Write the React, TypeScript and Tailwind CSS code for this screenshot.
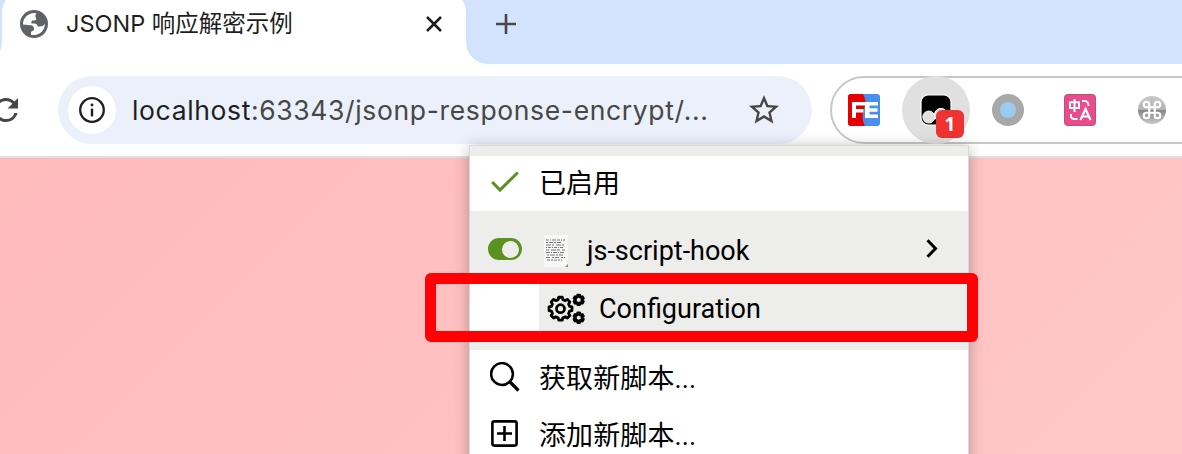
import type { ReactNode } from "react";
import { MdStarBorder, MdRefresh } from "react-icons/md";

function gearPath(cx: number, cy: number, outer: number, inner: number, teeth: number): string {
  const step = (Math.PI * 2) / teeth;
  const points: string[] = [];
  for (let i = 0; i < teeth; i++) {
    const a = i * step - Math.PI / 2;
    const ring: [number, number][] = [
      [-0.32, inner],
      [-0.2, outer],
      [0.2, outer],
      [0.32, inner],
    ];
    for (const [offset, radius] of ring) {
      const angle = a + offset * step;
      points.push(`${(cx + Math.cos(angle) * radius).toFixed(2)} ${(cy + Math.sin(angle) * radius).toFixed(2)}`);
    }
  }
  return `M${points.join("L")}Z`;
}

function GlobeIcon() {
  return (
    <svg className="size-7" viewBox="0 0 28 28">
      <circle cx="14" cy="14" r="14" fill="#5f6368" />
      <path
        d="M3 14C3 8 8 3.2 14.2 3L16.8 3.4C15.6 4.2 15.2 5.2 15.4 6.4C15.6 7.6 16.6 8 16.2 9.4C15.8 10.6 14 10.4 12.4 10.4C11.4 10.4 11.4 12 11.4 13.4H14.5C16.8 13.4 17.3 15 17.6 16.5H19.6C22 16.5 24 15.5 24.9 13.8C25 20 20 24.9 14.5 25H11V21.8C12.8 21.6 14 20.4 14 18.6C14 16.6 12.6 15.4 10.8 15.2L3 14.6Z"
        fill="#fff"
      />
    </svg>
  );
}

function InfoIcon() {
  return (
    <svg className="size-[26px]" viewBox="0 0 26 26" fill="none" stroke="#1f1f1f">
      <circle cx="13" cy="13" r="11.8" strokeWidth="2.3" />
      <path d="M13 11.6V19.4" strokeWidth="2.4" />
      <circle cx="13" cy="8" r="1.4" fill="#1f1f1f" stroke="none" />
    </svg>
  );
}

function FeIcon() {
  return (
    <svg className="size-8" viewBox="0 0 32 32">
      <rect width="32" height="32" rx="3" fill="#4a8ff0" />
      <path d="M3 0H15C17 4 18 7 17 11L15 19C14 24 15 28 17 32H3Q0 32 0 29V3Q0 0 3 0Z" fill="#e60000" />
      <path
        d="M4 8H17V11.5H8V15H15.5V18.5H8V24H4ZM17 8H30V11.5H21.5V14.3H29.5V17.7H21.5V20.5H30V24H17Z"
        fill="#fff"
      />
    </svg>
  );
}

function MonkeyIcon() {
  return (
    <svg className="size-8" viewBox="0 0 32 32">
      <rect x="1" y="1" width="30" height="30" rx="7" fill="#000" stroke="#fff" strokeWidth="1.2" />
      <circle cx="8.8" cy="23" r="6" fill="#e0e0e0" stroke="#fff" strokeWidth="1" />
      <circle cx="21" cy="21" r="6.6" fill="#e0e0e0" stroke="#fff" strokeWidth="1" />
    </svg>
  );
}

function TranslateIcon() {
  return (
    <svg className="size-8" viewBox="0 0 32 32" fill="none" stroke="#fff" strokeWidth="2">
      <rect x="0.5" y="0.5" width="31" height="31" rx="3" fill="#ec4b8b" stroke="#b5537b" strokeWidth="1" />
      <path d="M6 8.3H15V14H6ZM10.5 5V18" />
      <path d="M18 7H20.5C23.5 7 24.5 9 24.5 12M7 20V22C7 24.5 8.5 25 11 25H13.5" />
      <path d="M16.5 26L21.5 15L26.5 26M18 22.5H25" strokeWidth="2.2" />
    </svg>
  );
}

function CommandIcon() {
  return (
    <svg className="size-7" viewBox="0 0 28 28">
      <defs>
        <linearGradient id="shade" x1="0" y1="0" x2="0" y2="1">
          <stop offset="0" stopColor="#c9c9c9" />
          <stop offset="0.5" stopColor="#b2b2b2" />
          <stop offset="0.51" stopColor="#858585" />
          <stop offset="1" stopColor="#c8c8c8" />
        </linearGradient>
      </defs>
      <circle cx="14" cy="14" r="14" fill="url(#shade)" />
      <path
        d="M11.5 9V19A2.5 2.5 0 1 1 9 16.5H19A2.5 2.5 0 1 1 16.5 19V9A2.5 2.5 0 1 1 19 11.5H9A2.5 2.5 0 1 1 11.5 9Z"
        fill="none"
        stroke="#fff"
        strokeWidth="2"
        transform="translate(-1.4 -1.4) scale(1.1)"
      />
    </svg>
  );
}

function ScriptIcon() {
  return (
    <svg className="h-8 w-6" viewBox="0 0 24 32">
      <path d="M0 0H24V32H0Z" fill="#f8f8f8" />
      <g stroke="#777" strokeWidth="1.1">
        <path d="M2 5H21" strokeDasharray="3 1 1 1 4 1" />
        <path d="M2 7.5H18" strokeDasharray="2 1 4 1" />
        <path d="M2 10H21" strokeDasharray="5 1 2 2" />
        <path d="M2 12.5H20" strokeDasharray="1 1 3 1" />
        <path d="M2 15H21" strokeDasharray="3 2 5 1" />
        <path d="M2 17.5H21" strokeDasharray="4 1 1 1" />
        <path d="M3 20H19" strokeDasharray="2 1 5 1" />
        <path d="M2 22.5H21" strokeDasharray="4 2 2 1" />
        <path d="M3 25H18" strokeDasharray="3 1 2 1" />
      </g>
      <path d="M24 29V32H21Z" fill="#888" />
    </svg>
  );
}

function GearsIcon() {
  return (
    <svg className="h-8 w-10" viewBox="0 0 40 32" fill="none" stroke="#000" strokeLinejoin="round">
      <path d={gearPath(14.5, 15.7, 11.6, 9.4, 8)} strokeWidth="2.8" />
      <circle cx="14.5" cy="15.7" r="4" strokeWidth="2.8" />
      <path d={gearPath(32.7, 6.9, 4.9, 3.3, 6)} strokeWidth="2.8" />
      <path d={gearPath(32.7, 24.7, 4.9, 3.3, 6)} strokeWidth="2.8" />
    </svg>
  );
}

function MenuRow({ icon, children }: { icon: ReactNode; children: ReactNode }) {
  return (
    <div className="flex h-[57px] items-center">
      <span className="flex w-[69px] justify-center pb-1">{icon}</span>
      <span className="pt-px tracking-[0.1px]">{children}</span>
    </div>
  );
}

function TabStrip() {
  return (
    <header className="flex h-16 shrink-0 overflow-hidden bg-[#d3e3fd]">
      <div className="relative -mt-2 ml-0.5 flex h-[72px] w-[464px] items-start rounded-t-[20px] bg-white pt-[18px]">
        <svg className="absolute bottom-0 -left-[22px] size-[22px]" viewBox="0 0 22 22">
          <path d="M22 0V22H0A22 22 0 0 0 22 0Z" fill="#fff" />
        </svg>
        <svg className="absolute -right-[22px] bottom-0 size-[22px]" viewBox="0 0 22 22">
          <path d="M0 0V22H22A22 22 0 0 1 0 0Z" fill="#fff" />
        </svg>
        <div className="flex h-7 w-full items-center pl-[18px]">
          <GlobeIcon />
          <span className="ml-[18px] grow text-[23.5px] whitespace-nowrap text-[#1f1f1f]">JSONP 响应解密示例</span>
          <svg className="mr-6 size-4" viewBox="0 0 16 16" stroke="#1f1f1f" strokeWidth="2.6">
            <path d="M1 1L15 15M15 1L1 15" />
          </svg>
        </div>
      </div>
      <svg className="mt-3.5 ml-[30px] size-5" viewBox="0 0 20 20" stroke="#474747" strokeWidth="2.6">
        <path d="M10 0V20M0 10H20" />
      </svg>
    </header>
  );
}

function Toolbar() {
  return (
    <div className="flex h-[94px] shrink-0 border-b-2 border-[#dfe1e0] bg-white pt-3">
      <MdRefresh className="mt-[16px] -ml-3 size-9 shrink-0 text-[#474747]" />
      <div className="ml-[34px] flex h-[68px] w-[754px] shrink-0 items-center rounded-full bg-[#ebf0fa] pl-2.5">
        <span className="flex size-12 items-center justify-center rounded-full bg-white">
          <InfoIcon />
        </span>
        <span className="ml-4 grow pt-0.5 text-[26.5px] tracking-[0.64px] whitespace-nowrap text-[#474747]">
          <span className="text-[#1f1f1f]">localhost</span>:63343/jsonp-response-encrypt/...
        </span>
        <MdStarBorder className="mr-[30px] size-9 shrink-0 text-[#474747]" />
      </div>
      <div className="ml-[18px] flex h-[68px] w-[400px] shrink-0 items-center rounded-l-full border-2 border-[#c7c7c7] pl-4">
        <FeIcon />
        <span className="relative ml-[22px] flex size-[68px] shrink-0 items-center justify-center rounded-full bg-[#e0e0e0]">
          <MonkeyIcon />
          <span className="absolute top-[34px] left-[34px] flex size-7 items-center justify-center rounded-[6px] bg-[#ef3232] font-['Open_Sans'] text-[19px] font-bold text-white">
            1
          </span>
        </span>
        <span className="ml-[22px] flex size-8 items-center justify-center rounded-full bg-[#a8a8a8]">
          <span className="size-4 rounded-full bg-[#99ccf0]" />
        </span>
        <span className="ml-10">
          <TranslateIcon />
        </span>
        <span className="ml-[42px]">
          <CommandIcon />
        </span>
      </div>
    </div>
  );
}

function ScriptMenu() {
  return (
    <div className="absolute top-[145px] left-[469px] flex h-[330px] w-[500px] flex-col border border-[#d8d8d8] bg-white font-[Roboto,'Noto_Sans_CJK_SC',sans-serif] text-[27px] text-black shadow-[0_2px_14px_rgba(0,0,0,0.28)]">
      <div className="h-2.5 shrink-0 bg-[#ededeb]" />
      <div className="flex h-[55px] shrink-0 items-center">
        <span className="flex w-[69px] justify-center pb-[3px]">
          <svg className="h-[22px] w-7" viewBox="0 0 28 22" fill="none" stroke="#5c9021" strokeWidth="3">
            <path d="M1.2 11L9 19L26.8 1.5" />
          </svg>
        </span>
        <span className="pt-0.5">已启用</span>
      </div>
      <div className="flex h-[68px] shrink-0 items-center bg-[#ededeb] pt-2">
        <span className="flex w-[69px] justify-center">
          <span className="flex h-[22px] w-[34px] items-center justify-end rounded-full bg-[#5c9021] pr-[3px]">
            <span className="size-[17px] rounded-full bg-[#ededeb]" />
          </span>
        </span>
        <span className="ml-[5px] pt-1">
          <ScriptIcon />
        </span>
        <span className="ml-[19px] grow pt-1">js-script-hook</span>
        <svg className="mr-[30px] mb-px h-[19px] w-3" viewBox="0 0 12 19" fill="none" stroke="#000" strokeWidth="3">
          <path d="M1.5 1.2L9.5 9.5L1.5 17.8" />
        </svg>
      </div>
      <div className="flex h-[59px] shrink-0">
        <div className="w-[69px] bg-white" />
        <div className="flex grow items-center bg-[#ededeb] pl-[7px]">
          <GearsIcon />
          <span className="ml-[13px] pt-px">Configuration</span>
        </div>
      </div>
      <div className="h-3 shrink-0 bg-[#ededeb]" />
      <MenuRow
        icon={
          <svg className="size-[30px]" viewBox="0 0 30 30" fill="none" stroke="#000" strokeWidth="2.5">
            <circle cx="12" cy="12" r="10.9" />
            <path d="M19.5 19.5L28.5 28.5" strokeWidth="3.2" />
          </svg>
        }
      >
        获取新脚本...
      </MenuRow>
      <MenuRow
        icon={
          <svg className="size-[27px]" viewBox="0 0 27 27" fill="none" stroke="#000" strokeWidth="2.6">
            <rect x="1.4" y="1.4" width="24.2" height="24.2" rx="2" />
            <path d="M13.5 6V21M6 13.5H21" />
          </svg>
        }
      >
        添加新脚本...
      </MenuRow>
    </div>
  );
}

export default function App() {
  return (
    <div className="relative flex h-[454px] w-[1182px] flex-col overflow-hidden font-[Inter,'Noto_Sans_CJK_SC',sans-serif]">
      <TabStrip />
      <Toolbar />
      <main className="grow bg-[linear-gradient(135deg,#ffbabc,#ffc8c8)]" />
      <ScriptMenu />
      <div className="absolute top-[273px] left-[425px] h-[69px] w-[553px] rounded-[6px] border-[11px] border-[#ff0005]" />
    </div>
  );
}
